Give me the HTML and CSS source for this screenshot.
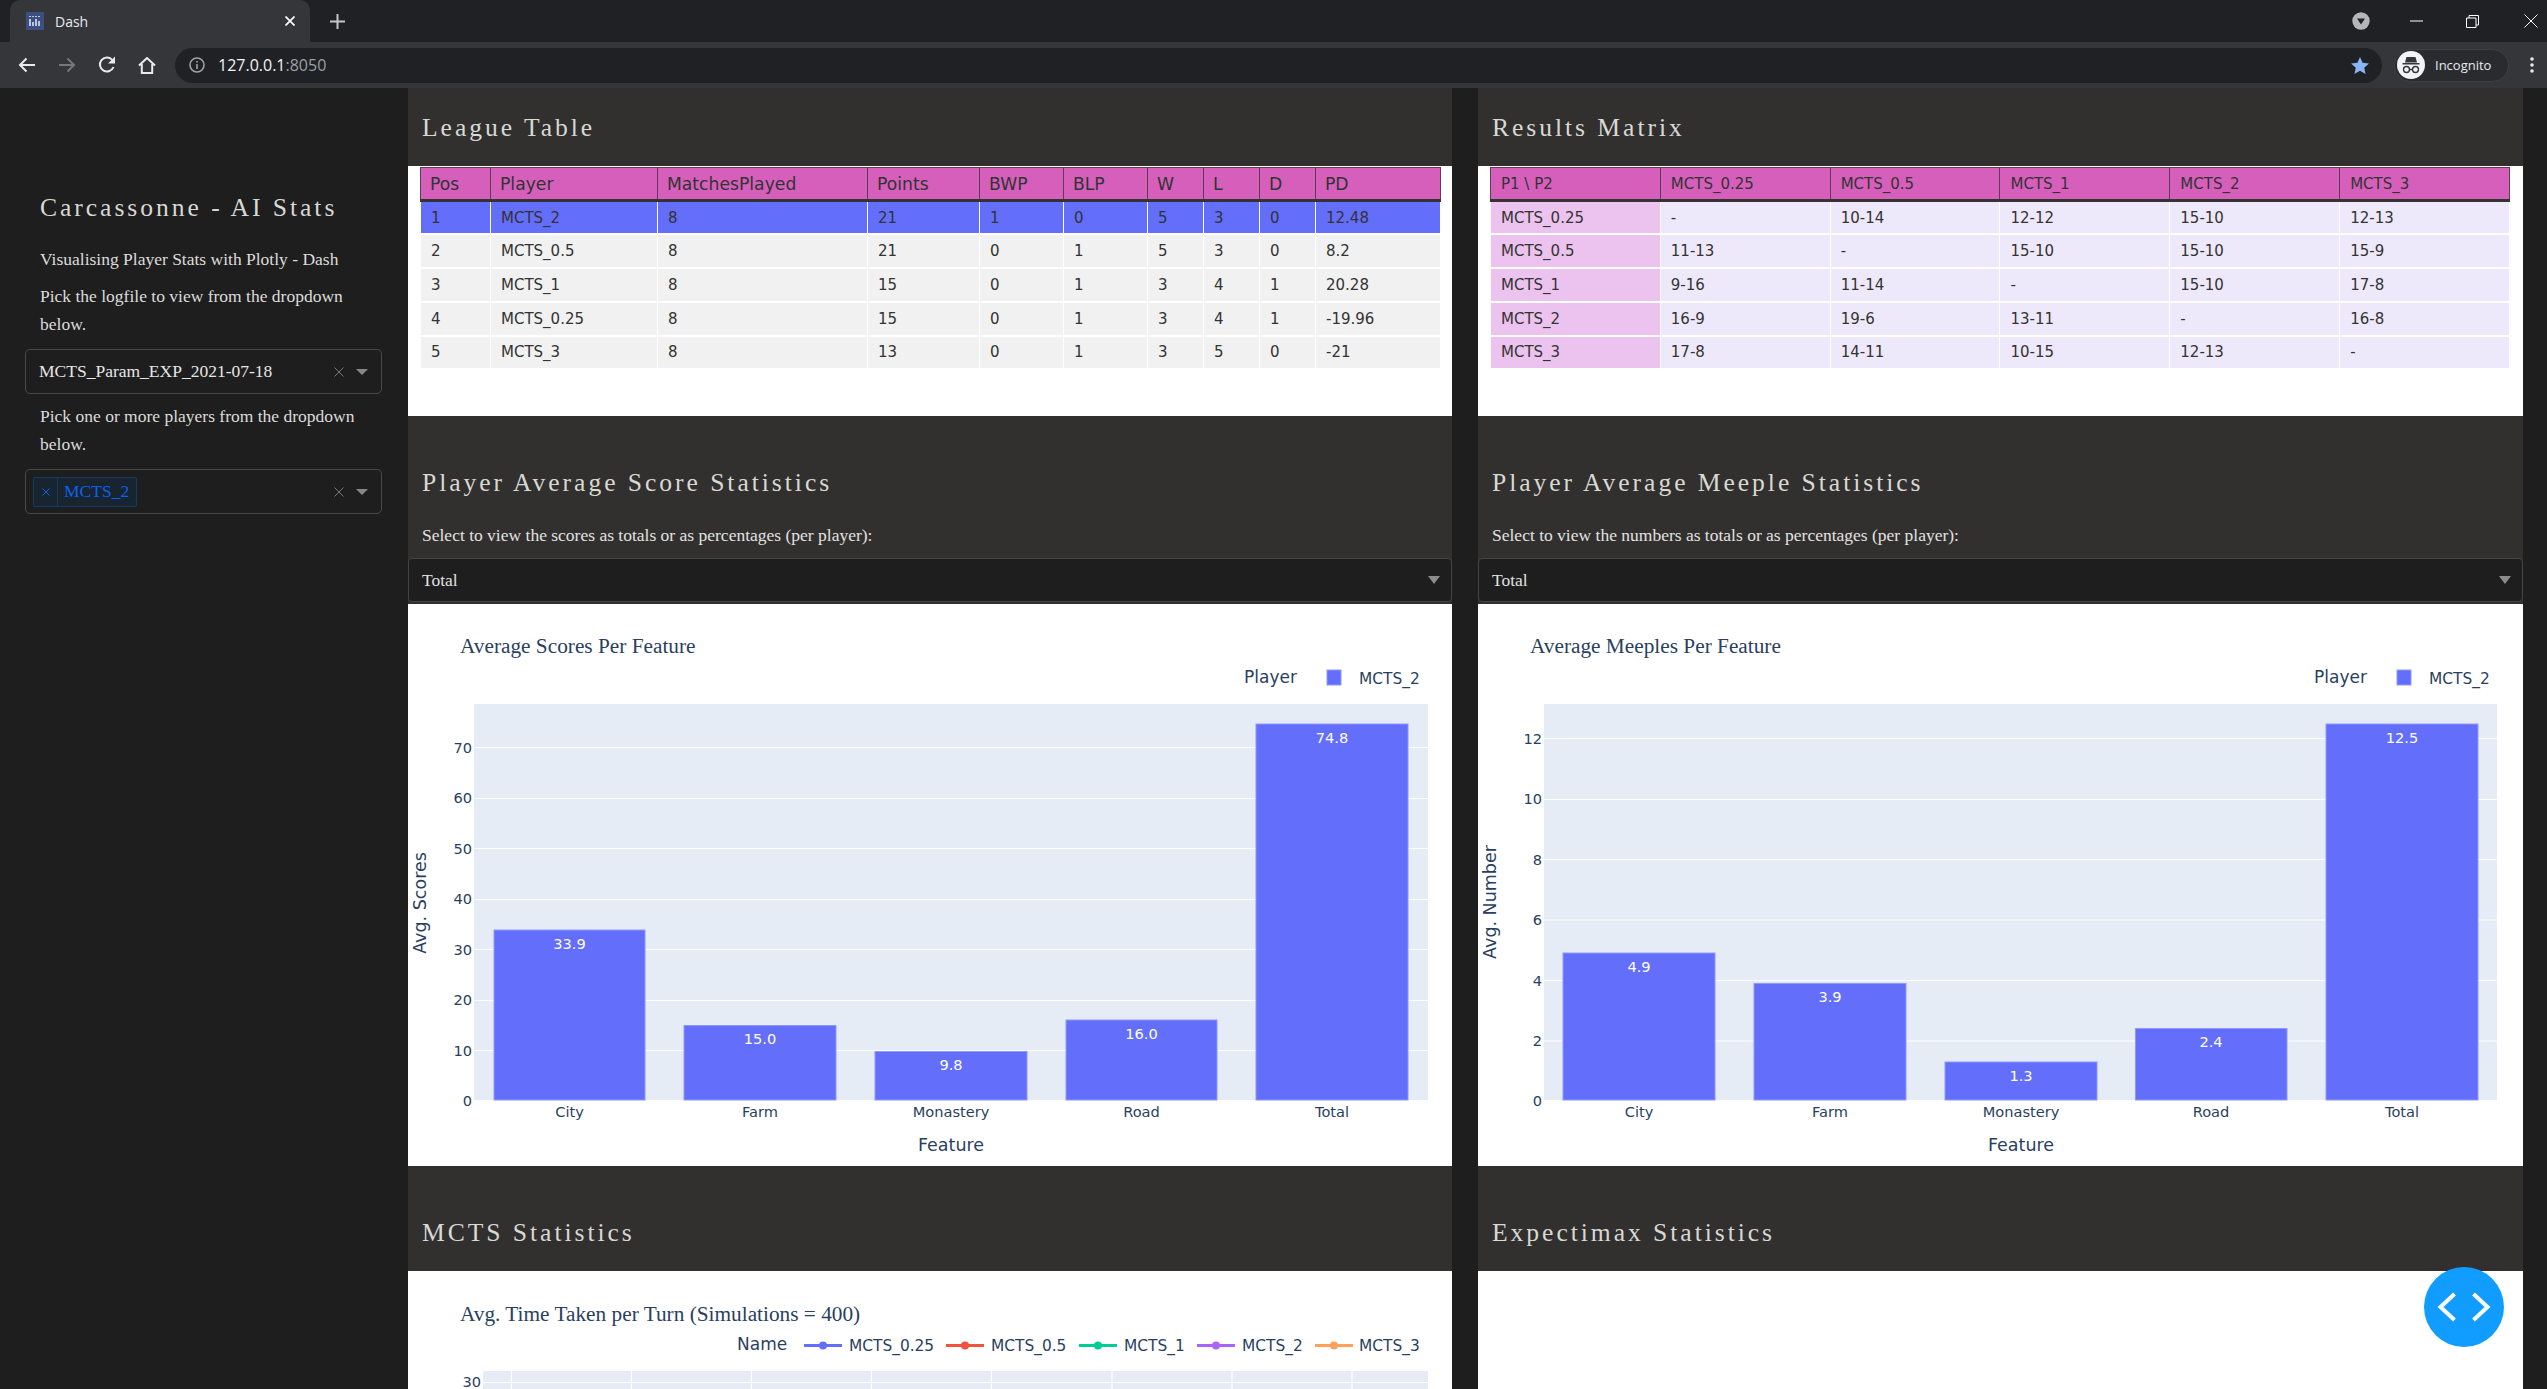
FILE: index.html
```html
<!DOCTYPE html>
<html lang="en">
<head>
    <meta charset="UTF-8">
    <title>Dash</title>
    <link rel="stylesheet" href="styles.css">
</head>
<body>
<div class="tabstrip">
    <div class="tab">
        <svg class="favicon" width="18" height="18" viewBox="0 0 18 18">
            <rect width="18" height="18" fill="#3b4f80"/>
            <path d="M4 4v1M7 4v1M10 4v1M13 4v1M4 7v7M7 10v4M10 7v7M13 9v5" stroke="#e8ecf5" stroke-width="1.5" fill="none"/>
        </svg>
        <span class="tab-title">Dash</span>
        <svg class="tab-close" width="10" height="10" viewBox="0 0 10 10"><path d="M0.5 0.5l9 9M9.5 0.5l-9 9" stroke="#fff" stroke-width="1.7"/></svg>
    </div>
    <svg class="new-tab" width="15" height="15" viewBox="0 0 15 15"><path d="M7.5 0v15M0 7.5h15" stroke="#c4c6c9" stroke-width="2"/></svg>
    <div class="window-controls">
        <svg class="profile-arrow" width="18" height="18" viewBox="0 0 18 18"><circle cx="9" cy="9" r="8.7" fill="#b5b6b8"/><path d="M5 6.5h8l-4 6z" fill="#202124"/></svg>
        <svg class="win-min" width="13" height="2" viewBox="0 0 13 2"><path d="M0 1h13" stroke="#fff"/></svg>
        <svg class="win-max" width="13" height="13" viewBox="0 0 13 13"><path d="M3 3V.5h9.5V10H10M.5 3h9.5v9.5H.5z" stroke="#fff" fill="none"/></svg>
        <svg class="win-close" width="14" height="14" viewBox="0 0 14 14"><path d="M.5.5l13 13M13.5.5l-13 13" stroke="#fff"/></svg>
    </div>
</div>
<div class="toolbar">
    <div class="nav-btn"><svg width="18" height="16" viewBox="0 0 18 16"><path d="M17 8H2M8.5 1.5L2 8l6.5 6.5" stroke="#e8eaed" stroke-width="2" fill="none"/></svg></div>
    <div class="nav-btn"><svg width="18" height="16" viewBox="0 0 18 16"><path d="M1 8h15M9.5 1.5L16 8l-6.5 6.5" stroke="#75777a" stroke-width="2" fill="none"/></svg></div>
    <div class="nav-btn"><svg width="18" height="18" viewBox="0 0 18 18"><path d="M15.5 11A7 7 0 1 1 14 3.6" stroke="#e8eaed" stroke-width="2" fill="none"/><path d="M17 0.5v7h-7z" fill="#e8eaed"/></svg></div>
    <div class="nav-btn"><svg width="18" height="17" viewBox="0 0 18 17"><path d="M1 8.5L9 1l8 7.5M3.8 7v9h10.4V7" stroke="#e8eaed" stroke-width="2" fill="none"/></svg></div>
    <div class="omnibox">
        <svg class="info-icon" width="16" height="16" viewBox="0 0 16 16"><circle cx="8" cy="8" r="7" stroke="#a0a2a5" stroke-width="1.6" fill="none"/><path d="M8 7v5M8 4v1.6" stroke="#a0a2a5" stroke-width="1.6"/></svg>
        <span class="url">127.0.0.1<span class="url-port">:8050</span></span>
        <svg class="star" width="18" height="17" viewBox="0 0 18 17"><path d="M9 0l2.6 5.8 6.4.7-4.8 4.2 1.4 6.3L9 13.8 3.4 17l1.4-6.3L0 6.5l6.4-.7z" fill="#8ab4f8"/></svg>
    </div>
    <div class="incognito">
        <svg width="28" height="28" viewBox="0 0 28 28">
            <circle cx="14" cy="14" r="14" fill="#f1f3f4"/>
            <path d="M9.5 6h9l1.5 5.5H8zM5.5 12h17v1.5h-17z" fill="#35363a"/>
            <circle cx="9.5" cy="18.5" r="3" fill="none" stroke="#35363a" stroke-width="1.4"/>
            <circle cx="18.5" cy="18.5" r="3" fill="none" stroke="#35363a" stroke-width="1.4"/>
            <path d="M12.5 18.5h3" stroke="#35363a" stroke-width="1.4"/>
        </svg>
        <span>Incognito</span>
    </div>
    <svg class="menu-dots" width="4" height="16" viewBox="0 0 4 16"><circle cx="2" cy="2" r="1.8" fill="#e8eaed"/><circle cx="2" cy="8" r="1.8" fill="#e8eaed"/><circle cx="2" cy="14" r="1.8" fill="#e8eaed"/></svg>
</div>

<div class="page">
    <div class="sidebar">
        <h1>Carcassonne - AI Stats</h1>
        <p class="first">Visualising Player Stats with Plotly - Dash</p>
        <p>Pick the logfile to view from the dropdown below.</p>
        <div class="dropdown">
            <span class="dropdown-value">MCTS_Param_EXP_2021-07-18</span>
            <svg class="clear" width="10" height="10" viewBox="0 0 10 10"><path d="M.5.5l9 9M9.5.5l-9 9" stroke="#777" stroke-width="1"/></svg>
            <span class="caret"></span>
        </div>
        <p>Pick one or more players from the dropdown below.</p>
        <div class="dropdown">
            <span class="tag">
                <span class="tag-x"><svg width="8" height="8" viewBox="0 0 8 8"><path d="M.5.5l7 7M7.5.5l-7 7" stroke="#0b62ee" stroke-width="1"/></svg></span>
                <span class="tag-label">MCTS_2</span>
            </span>
            <svg class="clear" width="10" height="10" viewBox="0 0 10 10"><path d="M.5.5l9 9M9.5.5l-9 9" stroke="#777" stroke-width="1"/></svg>
            <span class="caret"></span>
        </div>
    </div>

    <div class="main">
        <div class="band band-top"><h2>League Table</h2></div>
        <div class="band band-top"><h2>Results Matrix</h2></div>

        <div class="table-panel">
            <table class="league">
                <colgroup>
                    <col class="c-pos"><col class="c-player"><col class="c-matches"><col class="c-points"><col class="c-bwp"><col class="c-blp"><col class="c-small"><col class="c-small"><col class="c-small"><col class="c-pd">
                </colgroup>
                <tr><th>Pos</th><th>Player</th><th>MatchesPlayed</th><th>Points</th><th>BWP</th><th>BLP</th><th>W</th><th>L</th><th>D</th><th>PD</th></tr>
                <tr class="selected"><td>1</td><td>MCTS_2</td><td>8</td><td>21</td><td>1</td><td>0</td><td>5</td><td>3</td><td>0</td><td>12.48</td></tr>
                <tr><td>2</td><td>MCTS_0.5</td><td>8</td><td>21</td><td>0</td><td>1</td><td>5</td><td>3</td><td>0</td><td>8.2</td></tr>
                <tr><td>3</td><td>MCTS_1</td><td>8</td><td>15</td><td>0</td><td>1</td><td>3</td><td>4</td><td>1</td><td>20.28</td></tr>
                <tr><td>4</td><td>MCTS_0.25</td><td>8</td><td>15</td><td>0</td><td>1</td><td>3</td><td>4</td><td>1</td><td>-19.96</td></tr>
                <tr><td>5</td><td>MCTS_3</td><td>8</td><td>13</td><td>0</td><td>1</td><td>3</td><td>5</td><td>0</td><td>-21</td></tr>
            </table>
        </div>
        <div class="table-panel">
            <table class="matrix">
                <tr><th>P1 \ P2</th><th>MCTS_0.25</th><th>MCTS_0.5</th><th>MCTS_1</th><th>MCTS_2</th><th>MCTS_3</th></tr>
                <tr><td class="row-head">MCTS_0.25</td><td>-</td><td>10-14</td><td>12-12</td><td>15-10</td><td>12-13</td></tr>
                <tr><td class="row-head">MCTS_0.5</td><td>11-13</td><td>-</td><td>15-10</td><td>15-10</td><td>15-9</td></tr>
                <tr><td class="row-head">MCTS_1</td><td>9-16</td><td>11-14</td><td>-</td><td>15-10</td><td>17-8</td></tr>
                <tr><td class="row-head">MCTS_2</td><td>16-9</td><td>19-6</td><td>13-11</td><td>-</td><td>16-8</td></tr>
                <tr><td class="row-head">MCTS_3</td><td>17-8</td><td>14-11</td><td>10-15</td><td>12-13</td><td>-</td></tr>
            </table>
        </div>

        <div class="band band-select">
            <h2>Player Average Score Statistics</h2>
            <p>Select to view the scores as totals or as percentages (per player):</p>
            <div class="select-bar"><span>Total</span><span class="select-arrow"></span></div>
        </div>
        <div class="band band-select">
            <h2>Player Average Meeple Statistics</h2>
            <p>Select to view the numbers as totals or as percentages (per player):</p>
            <div class="select-bar"><span>Total</span><span class="select-arrow"></span></div>
        </div>

        <div class="chart-panel">
            <svg class="chart" width="1044" height="562" viewBox="0 0 1044 562">
                <text class="plot-title" x="52" y="49">Average Scores Per Feature</text>
                <text class="legend-title" x="836" y="79">Player</text>
                <rect class="bar" x="919" y="66" width="14" height="15"/>
                <text class="legend-text" x="951" y="80">MCTS_2</text>
                <rect class="plot-bg" x="66" y="100" width="954" height="396"/>
                <path class="grid" d="M66 143.5H1020M66 194.5H1020M66 244.5H1020M66 295.5H1020M66 345.5H1020M66 396.5H1020M66 446.5H1020"/>
                <rect class="bar" x="86" y="326" width="151" height="170"/>
                <rect class="bar" x="276" y="421.5" width="152" height="74.5"/>
                <rect class="bar" x="467" y="447.5" width="152" height="48.5"/>
                <rect class="bar" x="658" y="416" width="151" height="80"/>
                <rect class="bar" x="848" y="120" width="152" height="376"/>
                <text class="bar-value" x="161.5" y="345">33.9</text>
                <text class="bar-value" x="352" y="440">15.0</text>
                <text class="bar-value" x="543" y="466">9.8</text>
                <text class="bar-value" x="733.5" y="435">16.0</text>
                <text class="bar-value" x="924" y="139">74.8</text>
                <text class="tick-y" x="64" y="149">70</text>
                <text class="tick-y" x="64" y="199">60</text>
                <text class="tick-y" x="64" y="250">50</text>
                <text class="tick-y" x="64" y="300">40</text>
                <text class="tick-y" x="64" y="351">30</text>
                <text class="tick-y" x="64" y="401">20</text>
                <text class="tick-y" x="64" y="452">10</text>
                <text class="tick-y" x="64" y="502">0</text>
                <text class="tick-x" x="161.5" y="513">City</text>
                <text class="tick-x" x="352" y="513">Farm</text>
                <text class="tick-x" x="543" y="513">Monastery</text>
                <text class="tick-x" x="733.5" y="513">Road</text>
                <text class="tick-x" x="924" y="513">Total</text>
                <text class="axis-title" x="543" y="547">Feature</text>
                <text class="axis-title" transform="translate(18 299) rotate(-90)">Avg. Scores</text>
            </svg>
        </div>
        <div class="chart-panel">
            <svg class="chart" width="1045" height="562" viewBox="0 0 1045 562">
                <text class="plot-title" x="52" y="49">Average Meeples Per Feature</text>
                <text class="legend-title" x="836" y="79">Player</text>
                <rect class="bar" x="919" y="66" width="14" height="15"/>
                <text class="legend-text" x="951" y="80">MCTS_2</text>
                <rect class="plot-bg" x="66" y="100" width="953" height="396"/>
                <path class="grid" d="M66 134.5H1019M66 195.5H1019M66 255.5H1019M66 316H1019M66 376.5H1019M66 437H1019"/>
                <rect class="bar" x="85" y="349" width="152" height="147"/>
                <rect class="bar" x="276" y="379.5" width="152" height="116.5"/>
                <rect class="bar" x="467" y="458" width="152" height="38"/>
                <rect class="bar" x="657.5" y="424.5" width="151.5" height="71.5"/>
                <rect class="bar" x="848" y="120" width="152" height="376"/>
                <text class="bar-value" x="161" y="368">4.9</text>
                <text class="bar-value" x="352" y="398">3.9</text>
                <text class="bar-value" x="543" y="477">1.3</text>
                <text class="bar-value" x="733" y="443">2.4</text>
                <text class="bar-value" x="924" y="139">12.5</text>
                <text class="tick-y" x="64" y="140">12</text>
                <text class="tick-y" x="64" y="200">10</text>
                <text class="tick-y" x="64" y="261">8</text>
                <text class="tick-y" x="64" y="321">6</text>
                <text class="tick-y" x="64" y="382">4</text>
                <text class="tick-y" x="64" y="442">2</text>
                <text class="tick-y" x="64" y="502">0</text>
                <text class="tick-x" x="161" y="513">City</text>
                <text class="tick-x" x="352" y="513">Farm</text>
                <text class="tick-x" x="543" y="513">Monastery</text>
                <text class="tick-x" x="733" y="513">Road</text>
                <text class="tick-x" x="924" y="513">Total</text>
                <text class="axis-title" x="543" y="547">Feature</text>
                <text class="axis-title" transform="translate(18 298) rotate(-90)">Avg. Number</text>
            </svg>
        </div>

        <div class="band band-plain"><h2>MCTS Statistics</h2></div>
        <div class="band band-plain"><h2>Expectimax Statistics</h2></div>

        <div class="chart-panel">
            <svg class="chart" width="1044" height="118" viewBox="0 0 1044 118">
                <text class="plot-title" x="52" y="50">Avg. Time Taken per Turn (Simulations = 400)</text>
                <text class="legend-title" x="329" y="79">Name</text>
                <path class="leg-line l-a" d="M396 74.5h38"/><circle class="dot-a" cx="415" cy="74.5" r="4"/>
                <text class="legend-text" x="441" y="80">MCTS_0.25</text>
                <path class="leg-line l-b" d="M538 74.5h38"/><circle class="dot-b" cx="557" cy="74.5" r="4"/>
                <text class="legend-text" x="583" y="80">MCTS_0.5</text>
                <path class="leg-line l-c" d="M671 74.5h38"/><circle class="dot-c" cx="690" cy="74.5" r="4"/>
                <text class="legend-text" x="716" y="80">MCTS_1</text>
                <path class="leg-line l-d" d="M789 74.5h38"/><circle class="dot-d" cx="808" cy="74.5" r="4"/>
                <text class="legend-text" x="834" y="80">MCTS_2</text>
                <path class="leg-line l-e" d="M907 74.5h38"/><circle class="dot-e" cx="926" cy="74.5" r="4"/>
                <text class="legend-text" x="951" y="80">MCTS_3</text>
                <rect class="plot-bg" x="75" y="100" width="945" height="18"/>
                <path class="grid" d="M75 111.5H1020M103.5 100V118M223.5 100V118M343.5 100V118M463.5 100V118M583.5 100V118M704 100V118M824 100V118M944 100V118"/>
                <text class="tick-y" x="73" y="116">30</text>
            </svg>
        </div>
        <div class="chart-panel"></div>
    </div>
</div>

<div class="debug-btn">
    <svg width="54" height="30" viewBox="0 0 54 30"><path d="M17.5 2L3.5 15l14 13M36.5 2l14 13-14 13" stroke="#fff" stroke-width="4" fill="none"/></svg>
</div>
</body>
</html>
```

FILE: styles.css
```css
* {
    box-sizing: border-box;
}
body {
    margin: 0;
    height: 1389px;
    overflow: hidden;
    background-color: #1e1e1e;
    font-family: "Liberation Serif", serif;
}

/* browser chrome */
.tabstrip {
    display: flex;
    align-items: center;
    height: 42px;
    padding-left: 10px;
    background-color: #202124;
}
.tab {
    display: flex;
    align-items: center;
    width: 300px;
    height: 42px;
    padding: 0 15px 0 16px;
    border-radius: 10px 10px 0 0;
    background-color: #35363a;
}
.tab-title {
    margin-left: 11px;
    color: #e8eaed;
    font: 14px "Open Sans", sans-serif;
}
.tab-close {
    margin-left: auto;
}
.new-tab {
    margin-left: 20px;
}
.window-controls {
    display: flex;
    align-items: center;
    margin-left: auto;
    padding-right: 9px;
}
.profile-arrow {
    margin-right: 40px;
}
.win-min {
    margin-right: 43px;
}
.win-max {
    margin-right: 45px;
}
.toolbar {
    display: flex;
    align-items: center;
    height: 46px;
    padding-left: 7px;
    background-color: #35363a;
}
.nav-btn {
    display: flex;
    justify-content: center;
    align-items: center;
    width: 40px;
}
.omnibox {
    display: flex;
    align-items: center;
    width: 2207px;
    height: 35px;
    margin-left: 8px;
    padding: 0 13px 0 14px;
    border-radius: 18px;
    background-color: #202124;
}
.url {
    margin-left: 13px;
    color: #f1f3f4;
    font: 16px "Open Sans", sans-serif;
}
.url-port {
    color: #9aa0a6;
}
.star {
    margin-left: auto;
}
.incognito {
    display: flex;
    align-items: center;
    gap: 10px;
    width: 115px;
    height: 33px;
    margin-left: 12px;
    padding-left: 2px;
    border-radius: 17px;
    border: 1px solid #3f4044;
    background-color: #2a2b2e;
    color: #e8eaed;
    font: 13px "Open Sans", sans-serif;
}
.menu-dots {
    margin-left: 21px;
}

/* page */
.page {
    display: flex;
    height: 1301px;
}
.sidebar {
    width: 408px;
    flex-shrink: 0;
    padding: 105px 26px 0 25px;
    color: #dcdcdc;
}
h1,
h2 {
    margin: 0;
    color: #d8d8d4;
    font-weight: normal;
    font-size: 25.6px;
    line-height: 30px;
    letter-spacing: 2.95px;
}
.sidebar h1 {
    padding-left: 15px;
}
.sidebar p {
    margin: 9px 0 11px;
    padding-left: 15px;
    font-size: 17.5px;
    line-height: 27.4px;
}
.sidebar p.first {
    margin-top: 23px;
    margin-bottom: 10px;
}
.dropdown {
    display: flex;
    align-items: center;
    height: 45px;
    padding: 0 13px 0 7px;
    border: 1px solid #4a4a4a;
    border-radius: 5px;
    font-size: 17.5px;
}
.dropdown-value {
    padding-left: 6px;
    color: #e6e6e6;
}
.clear {
    margin-left: auto;
}
.caret {
    width: 0;
    height: 0;
    margin-left: 12px;
    border-style: solid;
    border-width: 6px 6px 0;
    border-color: #888 transparent transparent;
}
.tag {
    display: flex;
    height: 30px;
    align-items: center;
    border: 1px solid #123a63;
    border-radius: 2px;
    background-color: #18242f;
    color: #0b62ee;
}
.tag-x {
    display: flex;
    justify-content: center;
    align-items: center;
    width: 24px;
    height: 100%;
    border-right: 1px solid #123a63;
}
.tag-label {
    padding: 0 7px 0 6px;
}

.main {
    display: grid;
    grid-template-columns: 1044px 1045px;
    grid-template-rows: 78px 250px 188px 562px 105px 118px;
    column-gap: 26px;
}
.band {
    padding-left: 14px;
    background-color: #31302e;
}
.band-top {
    padding-top: 25px;
}
.band-select {
    padding-top: 52px;
    padding-left: 0;
}
.band-select h2,
.band-select p {
    padding-left: 14px;
}
.band-select p {
    margin: 24px 0 9px;
    color: #e2e2e2;
    font-size: 17.5px;
    line-height: 27px;
}
.band-plain {
    padding-top: 52px;
}
.select-bar {
    display: flex;
    justify-content: space-between;
    align-items: center;
    height: 44px;
    padding: 0 11px 0 13px;
    border: 1px solid #444;
    border-radius: 4px;
    background-color: #1e1e1e;
    color: #e2e2e2;
    font-size: 17.5px;
}
.select-arrow {
    width: 0;
    height: 0;
    border-style: solid;
    border-width: 8px 6px 0;
    border-color: #8c8c8c transparent transparent;
}

/* tables */
.table-panel {
    padding: 1px 13px 0 12px;
    background-color: #fff;
}
table {
    width: 100%;
    table-layout: fixed;
    border-collapse: collapse;
    font-family: "DejaVu Sans", sans-serif;
    color: #333;
}
.league {
    width: 1020px;
}
.c-pos { width: 70px; }
.c-player { width: 167px; }
.c-matches { width: 210px; }
.c-points { width: 112px; }
.c-bwp { width: 84px; }
.c-blp { width: 84px; }
.c-small { width: 56px; }
.c-pd { width: 125px; }
th {
    height: 33px;
    padding: 0 0 0 9px;
    border: 1px solid #5e3c58;
    border-bottom: 3px solid #333;
    background-color: #d65fbc;
    text-align: left;
    font-weight: normal;
    font-size: 17.2px;
}
.matrix th {
    padding-left: 10px;
    font-size: 15px;
}
td {
    height: 33.75px;
    padding: 0 0 0 10px;
    border: 1px solid #fff;
    border-bottom-width: 2px;
    background-color: #f1f1f1;
    font-size: 15px;
}
.selected td {
    background-color: #636efa;
}
.matrix td {
    background-color: #eee9fa;
}
.matrix td.row-head {
    background-color: #ecc3ee;
}

/* plots */
.chart-panel {
    overflow: hidden;
    background-color: #fff;
}
.chart {
    display: block;
    font-family: "DejaVu Sans", sans-serif;
}
.plot-title {
    font-family: "Liberation Serif", serif;
    font-size: 21.3px;
    fill: #2a3f5f;
}
.legend-title {
    font-size: 17px;
    fill: #2a3f5f;
}
.legend-text {
    font-size: 15.4px;
    fill: #2a3f5f;
}
.plot-bg {
    fill: #e5ecf6;
}
.grid {
    stroke: #fff;
    stroke-width: 1.2;
    fill: none;
}
.bar {
    fill: #636efa;
    stroke: #8f97fb;
    stroke-width: 1;
}
.bar-value {
    font-size: 14.6px;
    fill: #fff;
    text-anchor: middle;
}
.tick-y {
    font-size: 14.6px;
    fill: #2a3f5f;
    text-anchor: end;
}
.tick-x {
    font-size: 14.6px;
    fill: #2a3f5f;
    text-anchor: middle;
}
.axis-title {
    font-size: 17.5px;
    fill: #2a3f5f;
    text-anchor: middle;
}
.leg-line {
    stroke-width: 3;
    fill: none;
}
.l-a { stroke: #636efa; }
.l-b { stroke: #ef553b; }
.l-c { stroke: #00cc96; }
.l-d { stroke: #ab63fa; }
.l-e { stroke: #ffa15a; }
.dot-a { fill: #636efa; }
.dot-b { fill: #ef553b; }
.dot-c { fill: #00cc96; }
.dot-d { fill: #ab63fa; }
.dot-e { fill: #ffa15a; }

.debug-btn {
    position: fixed;
    left: 2424px;
    top: 1267px;
    display: flex;
    justify-content: center;
    align-items: center;
    width: 80px;
    height: 80px;
    border-radius: 50%;
    background-color: #119dff;
}
```
